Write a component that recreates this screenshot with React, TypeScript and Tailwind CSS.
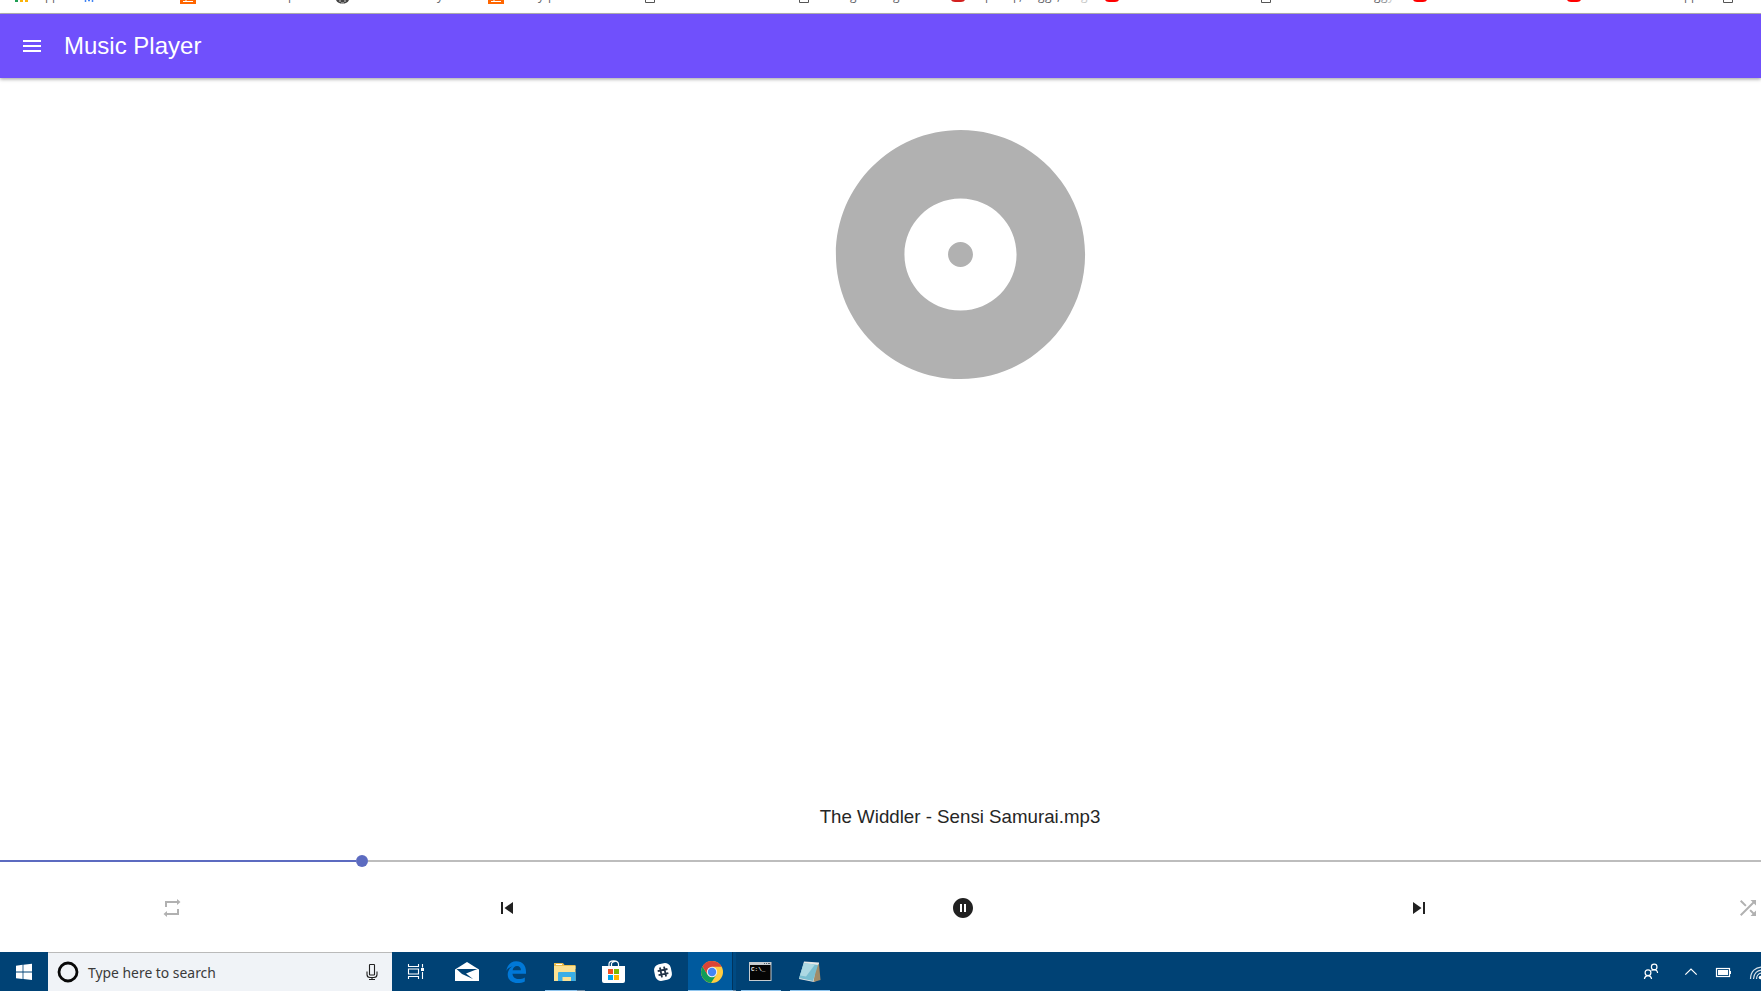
import React from "react";

const bookmarkLetters: [number, string, string][] = [
  [45, "p", "#6b6158"], [52, "p", "#5f6368"], [288, "p", "#5f6368"], [437, "y", "#5f6368"],
  [538, "y", "#5f6368"], [548, "p", "#5f6368"], [850, "g", "#5f6368"], [893, "g", "#5f6368"],
  [985, "p", "#5f6368"], [1013, "p", "#5f6368"], [1019, ",", "#5f6368"], [1038, "g", "#5f6368"],
  [1045, "g", "#5f6368"], [1057, ",", "#5f6368"], [1081, "g", "#c8c8c8"], [1374, "g", "#5f6368"],
  [1381, "g", "#8f9296"], [1388, "y", "#c8c8c8"], [1684, "p", "#5f6368"], [1691, "p", "#5f6368"],
];

function BookmarksEdge() {
  return (
    <svg className="block h-[13px] w-full shrink-0" viewBox="0 0 1761 13" aria-hidden="true">
      <path d="M15 0h3v2h-3z" fill="#1e9e54" />
      <path d="M20 0h3v2h-3zM25 0h3v2h-3z" fill="#fbb30a" />
      <path d="M85.5 2v-2M88 0.500h2M92.500 2v-2" stroke="#4285f4" strokeWidth="1.5" fill="none" />
      {[180, 488].map((x) => (
        <g key={x}>
          <path d={`M${x} 0h16v4h-16z`} fill="#ff6600" />
          <path d={`M${x + 3} 1.5h10M${x + 6} 0v2`} stroke="#fff" fill="none" />
        </g>
      ))}
      <path d="M336 0h13c-2 5-11 5-13 0z" fill="#444" />
      <path d="M339 1h2M344 1h2M341 3h3" stroke="#ccc" />
      {[645, 799, 1261, 1723].map((x) => (
        <path key={x} d={`M${x + 0.5} 0v2.5h9v-2.5`} stroke="#555" fill="none" />
      ))}
      {[951, 1105, 1413, 1567].map((x) => (
        <path key={x} d={`M${x} 0h14q-1 2-4 2h-6q-3 0-4-2z`} fill={x === 951 ? "#d3201f" : "#ff0000"} />
      ))}
      {bookmarkLetters.map(([x, letter, color]) => (
        <text key={x} x={x} y="0" fill={color} fontSize="12" fontFamily="Open Sans, sans-serif">{letter}</text>
      ))}
    </svg>
  );
}

function Icon({ d, className = "size-6" }: { d: string; className?: string }) {
  return (
    <svg viewBox="0 0 24 24" fill="currentColor" className={`block ${className}`} aria-hidden="true">
      <path d={d} />
    </svg>
  );
}

function Taskbar() {
  return (
    <footer className="flex h-[39px] w-[1761px] shrink-0 overflow-hidden bg-[#004275] text-white">
      <svg viewBox="0 0 48 39" className="h-[39px] w-12 shrink-0">
        <path fill="#fff" d="M16 13.700l6.600-.9v6.700H16zM23.400 12.700L32 11.700v7.800h-8.600zM16 20.400h6.600v6.700l-6.600-.9zM23.400 20.400H32V28l-8.600-.9z" />
      </svg>
      <div className="flex w-[344px] shrink-0 items-center border-t border-[#bababa] bg-[#f0f3f7]">
        <svg viewBox="0 0 24 24" className="ml-2 size-6">
          <circle cx="12" cy="12" r="9" fill="none" stroke="#080808" strokeWidth="2.8" />
        </svg>
        <span className="ml-2 flex-1 whitespace-nowrap pt-0.5 font-['Noto_Sans',sans-serif] text-[13.9px] leading-5 text-[#3a3a3a]">
          Type here to search
        </span>
        <svg viewBox="0 0 12 18" className="mr-[14px] h-[18px] w-3" fill="none" stroke="#222" strokeWidth="1.1">
          <rect x="3.5" y="1.5" width="5" height="10.5" rx=".6" />
          <path d="M1 8.5v3q0 3 3 3h4q3 0 3-3v-3M6 14.5v2.5M3 16.5h6" />
        </svg>
      </div>
      <svg viewBox="0 0 48 39" className="h-[39px] w-12 shrink-0" fill="none" stroke="#fff" strokeWidth="1.1">
        <path d="M16.5 12v2.5h10V12M16.5 27v-2.500h10V27M16.500 17h10v5h-10zM30.500 12v3.500M30.500 20v7" />
        <path d="M29 16h3v3h-3z" fill="#fff" stroke="none" />
      </svg>
      <svg viewBox="440 952 420 39" className="h-[39px] w-[420px] shrink-0">
        <path fill="#fff" d="M455 969.500l12-7.500 12 7.500V981h-24z" />
        <path fill="#004275" d="M456.500 969h21l-11.500 4.500 7 5.500-11-5z" />
        <path fill="#0078d7" d="M506.300 971c.8-6 4.700-9.700 9.900-9.700 6.500 0 9.800 4.600 9.800 10.500v2h-13.500c.2 3.600 3 5.200 6.300 5.200 2.400 0 4.300-.6 6-1.600v4c-2 1.200-4.500 1.700-7.200 1.700-6 0-9.900-3.400-9.900-8.700 0-3.800 2.200-6.600 5-8.100-3 .8-5.200 2.500-6.400 4.700zm6.300-.7h8.300c0-2.600-1.400-4.300-3.900-4.300-2.300 0-4 1.700-4.400 4.300z" />
        <path fill="#e8bd4e" d="M554 963h9l1.500 2h11V969H554z" />
        <path fill="#fbe192" d="M554 966h21.500v15H554z" />
        <path fill="#fff" d="M556 964h6v1h-6z" />
        <path fill="#3aaee6" d="M558 981v-8q0-1 1-1h15.500q1 0 1 1v8H571v-4h-8.500v4z" />
        <path fill="#fff" d="M602 966h23v15q0 2-2 2h-19q-2 0-2-2z" />
        <path fill="none" stroke="#fff" strokeWidth="1.200" d="M609 966v-2q0-3 4.500-3.200T618.500 964v2M611.500 966v-2q0-2 4-2.500" />
        <path fill="#f25022" d="M608 969h5v5h-5z" />
        <path fill="#7fba00" d="M614 969h5v5h-5z" />
        <path fill="#00a4ef" d="M608 975h5v5h-5z" />
        <path fill="#ffb900" d="M614 975h5v5h-5z" />
        <g transform="rotate(-12 663 972)">
          <rect x="654.500" y="963.500" width="17" height="17" rx="6" fill="#fff" />
          <path d="M660.900 967v10M665.100 967v10M658 970h10M658 974.200h10" stroke="#233347" strokeWidth="1.800" />
        </g>
        <path fill="#005a9e" d="M688 952h44v39h-44z" />
        <path fill="#00345e" d="M732 952h1v39h-1z" />
        <path fill="#004a82" d="M733 952h3v39h-3z" />
        <circle cx="712" cy="972" r="11" fill="#ffcd41" />
        <path fill="#0f9d58" d="M702.500 966.500a11 11 0 0 0 8.500 16.450l5.500-8.350-9-.1z" />
        <path fill="#db4437" d="M702.500 966.500a11 11 0 0 1 19.200.3H712l-4.500 7.700z" />
        <circle cx="712" cy="972" r="5.200" fill="#f1f1f1" />
        <circle cx="712" cy="972" r="4.200" fill="#4285f4" />
        <path fill="#c7ccd0" d="M749 962h22.500v19H749z" />
        <path fill="#050505" d="M750 965h20.500v15H750z" />
        <path fill="#52616b" d="M764 963h1v1h-1zM766 963h1v1h-1zM768 963h2v1h-2z" />
        <text x="751" y="971" fill="#eee" fontFamily="Liberation Mono, monospace" fontSize="6" fontWeight="bold">C:\_</text>
        <path fill="#e0e4e4" d="M804 961.500l15 1-1 17-4 2.500-15-3z" />
        <path fill="#a08b68" d="M816 966l3-2 1.500 16-7 2z" />
        <path fill="#79bed0" d="M804 963l14 2-5 16-14-3z" />
        <path fill="#add9e3" d="M804 963l11 1.500-9 12-6-1z" />
        <path stroke="#eee" strokeWidth="1" strokeDasharray="1 1" d="M804.500 962.500l14 1.500" />
        <path fill="#8fc5ee" d="M545 990h32v1h-32zM688 990h45v1h-45zM741 990h40v1h-40zM790 990h40v1h-40z" />
        <path fill="#7190aa" d="M577 990h8v1h-8zM733 990h3v1h-3z" />
      </svg>
      <svg viewBox="1640 952 121 39" className="ml-auto h-[39px] w-[121px] shrink-0" fill="none" stroke="#fff" strokeWidth="1.200">
        <circle cx="1648" cy="972.700" r="2.900" />
        <path d="M1644.500 979v-.3q.5-3 3.500-3t3.500 3v.3" />
        <circle cx="1654.200" cy="967" r="2.800" />
        <path d="M1651.500 970.500q1-.9 2.700-.9 3 0 3.400 3.400" />
        <path d="M1685.300 974.700l5.700-5.700 5.700 5.700" />
        <rect x="1716.500" y="968.500" width="13" height="8" />
        <path fill="#fff" stroke="none" d="M1718 970h10v5h-10zM1730 971h1v3h-1z" />
        <path d="M1750.500 979c0-7.500 5-12 12-12M1753.500 979c0-5.500 4-9 9-9M1756.500 979c0-4 3-6 6-6" opacity=".85" />
        <circle cx="1760.500" cy="977.500" r="1.800" fill="#fff" stroke="none" />
      </svg>
    </footer>
  );
}

export default function App() {
  return (
    <div className="flex h-[991px] w-full flex-col overflow-hidden bg-white font-['Liberation_Sans',Arial,sans-serif]">
      <BookmarksEdge />
      <div className="h-px shrink-0 bg-[#b6b4b6]" />
      <header className="z-10 flex h-16 shrink-0 items-center bg-[#7050fc] pl-5 text-white shadow-[0_1px_3px_rgba(0,0,0,0.26),0_2px_4px_rgba(0,0,0,0.12)]">
        <Icon d="M3 18h18v-2H3v2zm0-5h18v-2H3v2zm0-7v2h18V6H3z" />
        <h1 className="ml-5 whitespace-nowrap text-2xl leading-none">Music Player</h1>
      </header>
      <main className="flex w-[1920px] flex-1 flex-col">
        <div className="flex flex-1 justify-center pt-[26.5px]">
          <Icon
            className="size-[299px] text-[#b1b1b1]"
            d="M12 2C6.480 2 2 6.480 2 12s4.480 10 10 10 10-4.480 10-10S17.520 2 12 2zm0 14.500c-2.490 0-4.500-2.010-4.500-4.500S9.510 7.500 12 7.500s4.500 2.010 4.500 4.500-2.010 4.500-4.500 4.500zm0-5.500c-.55 0-1 .45-1 1s.45 1 1 1 1-.45 1-1-.45-1-1-1z"
          />
        </div>
        <h2 className="mb-[26px] text-center text-[18.72px] leading-6 text-[#262626]">The Widdler - Sensi Samurai.mp3</h2>
        <div className="flex h-3 items-center">
          <div className="h-0.5 w-[356px] bg-[#5c6bc0]" />
          <div className="size-3 rounded-full bg-[#5c6bc0]" />
          <div className="h-0.5 flex-1 bg-[#bdbdbd]" />
        </div>
        <div className="flex h-[85px] items-center pb-[3px] pl-40 text-[#212121]">
          <button className="text-[#b1b1b1]" aria-label="Repeat">
            <Icon d="M17 3l3.500 3L17 9V7H7v4H5V5h12zM7 21l-3.500-3L7 15v2h10v-4h2v6H7z" />
          </button>
          <button className="ml-[311px]" aria-label="Previous">
            <Icon d="M6 6h2v12H6zm3.500 6l8.500 6V6z" />
          </button>
          <button className="ml-[432px]" aria-label="Pause">
            <Icon d="M12 2C6.480 2 2 6.480 2 12s4.480 10 10 10 10-4.480 10-10S17.520 2 12 2zm-1 14H9V8h2v8zm4 0h-2V8h2v8z" />
          </button>
          <button className="ml-[432px]" aria-label="Next">
            <Icon d="M6 18l8.500-6L6 6v12zM16 6v12h2V6h-2z" />
          </button>
          <button className="ml-[305px] text-[#b1b1b1]" aria-label="Shuffle">
            <Icon d="M10.590 9.170L5.410 4 4 5.410l5.170 5.170 1.420-1.410zM14.500 4l2.040 2.040L4 18.590 5.410 20 17.960 7.460 20 9.500V4h-5.500zm.33 9.410l-1.410 1.410 3.130 3.130L14.500 20H20v-5.500l-2.040 2.040-3.130-3.130z" />
          </button>
        </div>
      </main>
      <Taskbar />
    </div>
  );
}
